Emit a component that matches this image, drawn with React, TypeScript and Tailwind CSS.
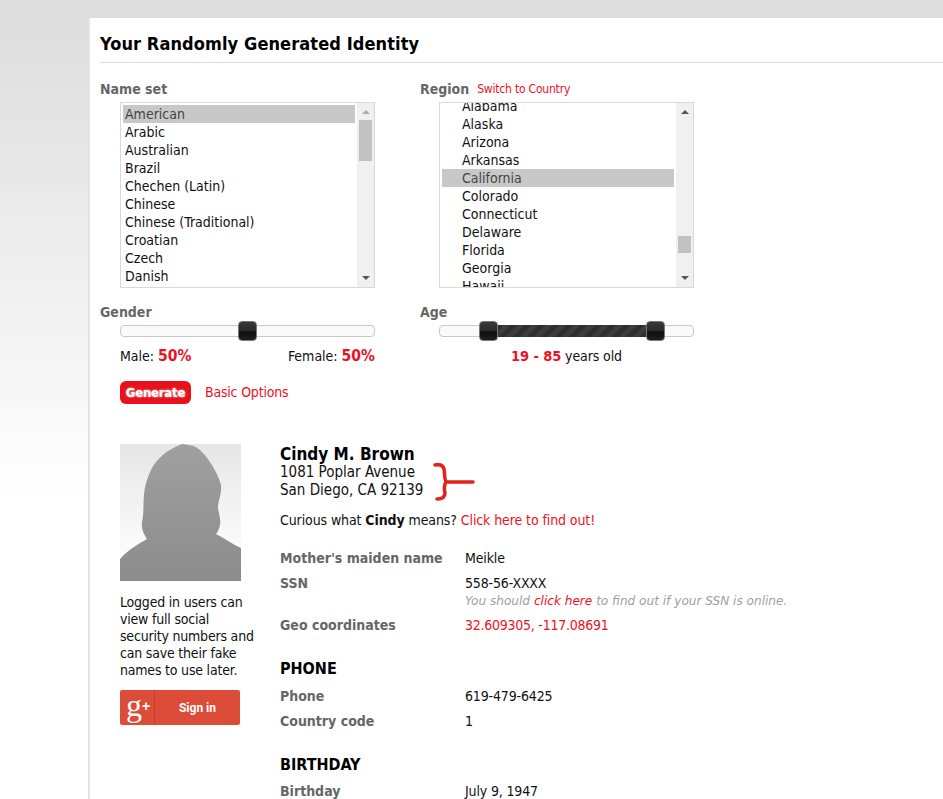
const body = "font-['DejaVu_Sans_Condensed','Noto_Sans',sans-serif]";

const names = ["American", "Arabic", "Australian", "Brazil", "Chechen (Latin)", "Chinese", "Chinese (Traditional)", "Croatian", "Czech", "Danish"];
const regions = ["Alabama", "Alaska", "Arizona", "Arkansas", "California", "Colorado", "Connecticut", "Delaware", "Florida", "Georgia", "Hawaii"];

function ListBox({ items, selected, indent, top, thumbTop, thumbH, arrowColor }: { items: string[]; selected: string; indent: string; top: string; thumbTop: string; thumbH: string; arrowColor: string }) {
    return (
        <div className="flex h-[186px] w-[255px] border border-[#d9d9d9] bg-white">
            <div className="flex-1 overflow-hidden pl-[2px]">
                <div className={top}>
                    {items.map((item) => (
                        <div key={item} className={`h-[18px] w-[232px] text-[14px] leading-[18px] ${indent} ${item === selected ? "bg-[#c8c8c8] text-[#444]" : "text-[#111]"}`}>
                            {item}
                        </div>
                    ))}
                </div>
            </div>
            <div className="flex w-[17px] flex-col items-center bg-[#f0f0f0]">
                <div className="mt-[7px] h-0 w-0 border-x-[4px] border-b-[4px] border-x-transparent" style={{ borderBottomColor: arrowColor }}></div>
                <div className={`w-[13px] bg-[#c2c2c2] ${thumbTop} ${thumbH}`}></div>
                <div className="mt-auto mb-[7px] h-0 w-0 border-x-[4px] border-t-[4px] border-x-transparent border-t-[#555]"></div>
            </div>
        </div>
    );
}

function Handle({ pos }: { pos: string }) {
    return (
        <div className={`absolute top-[-5px] h-[20px] w-[19px] overflow-hidden rounded-[4px] border border-[#777] bg-[linear-gradient(#383838_0,#2a2a2a_50%,#0e0e0e_55%,#1e1e1e_100%)] ${pos}`}></div>
    );
}

function Row({ label, children }: { label: string; children: React.ReactNode }) {
    return (
        <div className="flex text-[14px] leading-[18px]">
            <div className="w-[185px] font-bold text-[#666]">{label}</div>
            <div className="tracking-[-0.15px] text-[#111]">{children}</div>
        </div>
    );
}

export default function App() {
    return (
        <div className={`h-[799px] overflow-hidden bg-[linear-gradient(#dcdcdc_0,#ffffff_500px)] pt-[18px] pl-[88px] ${body}`}>
            <div className="h-[781px] border-l-2 border-[#e4e4e4] bg-white pl-[10px]">
                <div className="flex h-[45px] items-center border-b border-[#dddddd] pt-[7px]">
                    <h1 className="text-[18px] font-bold tracking-[0.1px] text-black">Your Randomly Generated Identity</h1>
                </div>

                <div className="mt-[17px] flex">
                    <div className="w-[320px]">
                        <div className="text-[14px] leading-[18px] font-bold text-[#666]">Name set</div>
                        <div className="mt-[4px] ml-[20px]">
                            <ListBox items={names} selected="American" indent="pl-[2px]" top="mt-[2px]" thumbTop="mt-[6px]" thumbH="h-[41px]" arrowColor="#aaa" />
                        </div>
                    </div>
                    <div>
                        <div className="flex items-center leading-[18px]">
                            <span className="text-[14px] font-bold text-[#666]">Region</span>
                            <span className="ml-[8px] text-[12px] tracking-[-0.2px] text-[#ee1122]">Switch to Country</span>
                        </div>
                        <div className="mt-[4px] ml-[19px]">
                            <ListBox items={regions} selected="California" indent="pl-[20px]" top="mt-[-6px]" thumbTop="mt-[122px]" thumbH="h-[17px]" arrowColor="#555" />
                        </div>
                    </div>
                </div>

                <div className="mt-[15px] flex">
                    <div className="w-[320px]">
                        <div className="text-[14px] leading-[18px] font-bold text-[#666]">Gender</div>
                        <div className="relative mt-[4px] ml-[20px] h-[12px] w-[255px] rounded-[4px] border border-[#c8c8c8] bg-[#fafafa]">
                            <Handle pos="left-[117px]" />
                        </div>
                        <div className="mt-[10px] ml-[20px] flex w-[255px] justify-between text-[14px] leading-[18px] text-[#111]">
                            <span>Male: <b className="text-[15.5px] text-[#ee1122]">50%</b></span>
                            <span>Female: <b className="text-[15.5px] text-[#ee1122]">50%</b></span>
                        </div>
                    </div>
                    <div>
                        <div className="text-[14px] leading-[18px] font-bold text-[#666]">Age</div>
                        <div className="relative mt-[4px] ml-[19px] h-[12px] w-[255px] rounded-[4px] border border-[#c8c8c8] bg-[#fafafa]">
                            <div className="absolute top-[-1px] left-[49px] h-[12px] w-[160px] bg-[repeating-linear-gradient(135deg,#3c3c3c_0,#3c3c3c_5px,#2e2e2e_5px,#2e2e2e_10px)]"></div>
                            <Handle pos="left-[39px]" />
                            <Handle pos="left-[206px]" />
                        </div>
                        <div className="mt-[10px] ml-[19px] w-[255px] text-center text-[14px] leading-[18px] tracking-[-0.1px] text-[#111]">
                            <b className="text-[14.5px] text-[#ee1122]">19 - 85</b> years old
                        </div>
                    </div>
                </div>

                <div className="mt-[16px] ml-[20px] flex items-center gap-[14px]">
                    <button className="h-[23px] w-[71px] rounded-[6px] bg-[#e8101a] text-[13px] font-bold tracking-[-0.2px] text-white [text-shadow:0_0_2px_#fff]">Generate</button>
                    <a className="text-[14px] tracking-[-0.2px] text-[#ee1122]" href="#">Basic Options</a>
                </div>

                <div className="mt-[40px] ml-[20px] flex">
                    <div className="w-[160px]">
                        <svg width="121" height="137" viewBox="0 0 121 137" className="block">
                            <defs>
                                <linearGradient id="bgFade" x1="0" y1="0" x2="0" y2="1">
                                    <stop offset="0" stopColor="#e6e6e6" />
                                    <stop offset="0.75" stopColor="#fbfbfb" />
                                </linearGradient>
                                <linearGradient id="bodyFade" x1="0" y1="0" x2="0" y2="1">
                                    <stop offset="0" stopColor="#a0a0a0" />
                                    <stop offset="1" stopColor="#8c8c8c" />
                                </linearGradient>
                            </defs>
                            <rect width="121" height="137" fill="url(#bgFade)" />
                            <path d="M0 115 C8 106 18 100 27 95 C24 90 21 85 22 78 C24 70 23 60 24 51 C25 40 28 32 32 24 C36 16 46 6 62 0 C68 1 72 1 76 3 C82 7 86 12 90 18 C95 26 99 33 101 41 C102 50 98 56 98 64 C99 70 101 76 100 81 C99 85 98 88 96 90 C104 94 112 100 121 104 L121 137 L0 137 Z" fill="url(#bodyFade)" />
                        </svg>
                        <p className="mt-[13px] w-[140px] text-[14px] leading-[17px] tracking-[-0.2px] text-[#111]">
                            Logged in users can view full social security numbers and can save their fake names to use later.
                        </p>
                        <div className="mt-[11px] flex h-[35px] w-[120px] rounded-[2px] bg-[#dd4b39] text-white">
                            <div className="flex w-[35px] items-center border-r border-[#c23f2e] pl-[6px]">
                                <span className="mt-[-6px] font-['Liberation_Serif',serif] text-[32px] leading-none">g</span>
                                <span className="mt-[-4px] font-['Liberation_Sans',sans-serif] text-[14px] leading-none font-bold">+</span>
                            </div>
                            <div className="flex flex-1 items-center justify-center font-['Roboto',sans-serif] text-[12px] font-bold">Sign in</div>
                        </div>
                    </div>

                    <div className="relative flex-1">
                        <div className="mb-[-1px] text-[17px] leading-[20px] font-bold text-black">Cindy M. Brown</div>
                        <div className="text-[15px] leading-[18px] text-[#111]">1081 Poplar Avenue<br />San Diego, CA 92139</div>
                        <svg width="44" height="38" viewBox="0 0 44 38" className="absolute top-[19px] left-[152px]">
                            <path d="M3 2 C8 1 11 2 12 6 C13 11 12 15 14 19 C12 22 12 26 13 30 C13 34 10 36 5 36 M14 19 L41 19" fill="none" stroke="#e2231a" strokeWidth="3.5" strokeLinecap="round" strokeLinejoin="round" />
                        </svg>
                        <div className="mt-[12px] text-[14px] leading-[18px] tracking-[-0.1px] text-[#111]">
                            Curious what <b>Cindy</b> means? <a className="text-[#ee1122]" href="#">Click here to find out!</a>
                        </div>

                        <div className="mt-[20px]"><Row label="Mother's maiden name">Meikle</Row></div>
                        <div className="mt-[7px]">
                            <Row label="SSN">558-56-XXXX</Row>
                            <div className="ml-[185px] font-['DejaVu_Sans',sans-serif] text-[12.1px] leading-[18px] text-[#a0a0a0] italic">
                                You should <a className="text-[#ee1122]" href="#">click here</a> to find out if your SSN is online.
                            </div>
                        </div>
                        <div className="mt-[6px]">
                            <Row label="Geo coordinates"><span className="tracking-[-0.25px] text-[#ee1122]">32.609305, -117.08691</span></Row>
                        </div>

                        <h3 className="mt-[26px] text-[16px] leading-[18px] font-bold text-black">PHONE</h3>
                        <div className="mt-[9px]"><Row label="Phone">619-479-6425</Row></div>
                        <div className="mt-[7px]"><Row label="Country code">1</Row></div>

                        <h3 className="mt-[26px] text-[16px] leading-[18px] font-bold text-black">BIRTHDAY</h3>
                        <div className="mt-[8px]"><Row label="Birthday">July 9, 1947</Row></div>
                    </div>
                </div>
            </div>
        </div>
    );
}
